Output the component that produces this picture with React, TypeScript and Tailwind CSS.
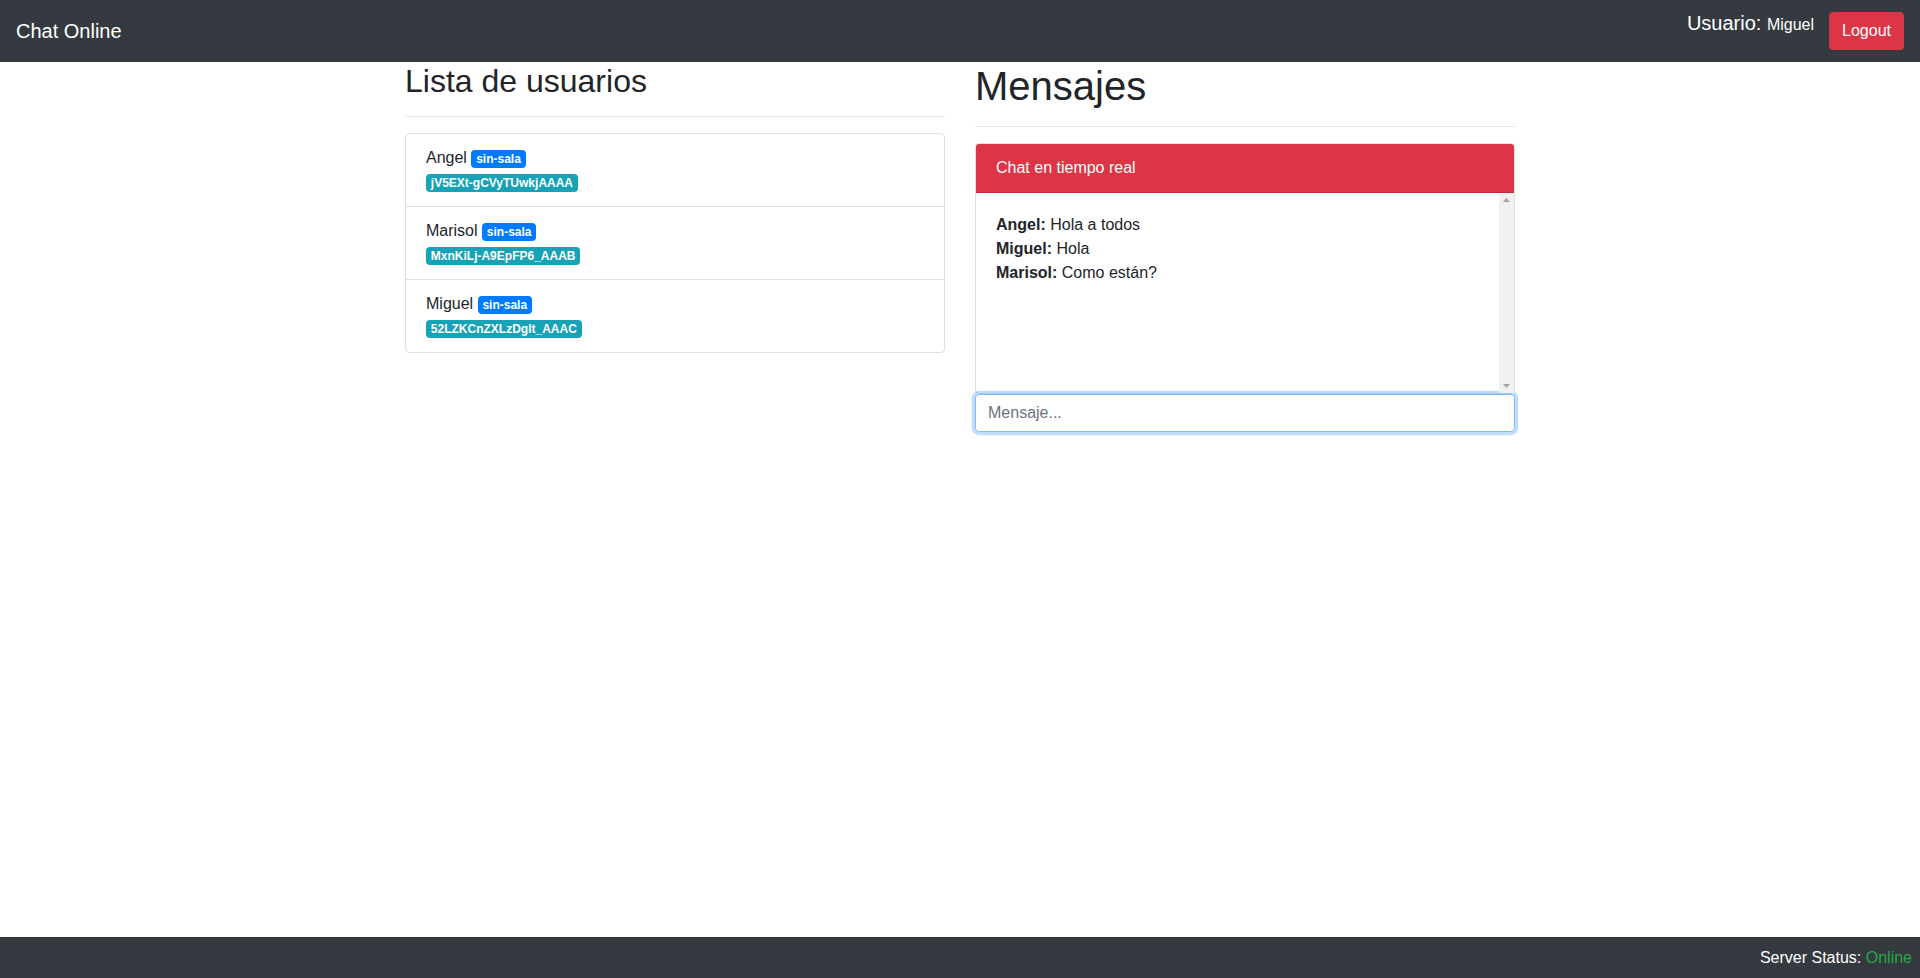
import { useState } from "react";

const users = [
  { name: "Angel", room: "sin-sala", id: "jV5EXt-gCVyTUwkjAAAA" },
  { name: "Marisol", room: "sin-sala", id: "MxnKiLj-A9EpFP6_AAAB" },
  { name: "Miguel", room: "sin-sala", id: "52LZKCnZXLzDglt_AAAC" },
];

const messages = [
  { from: "Angel", text: "Hola a todos" },
  { from: "Miguel", text: "Hola" },
  { from: "Marisol", text: "Como están?" },
];

function Badge({ color, children }: { color: string; children: React.ReactNode }) {
  return (
    <span
      className={`inline-block align-baseline px-[0.4em] py-[0.25em] text-[12px] font-bold leading-none text-white rounded whitespace-nowrap ${color}`}
    >
      {children}
    </span>
  );
}

// classic scrollbar track (content does not overflow, so no thumb)
function ScrollTrack() {
  return (
    <div className="w-[15px] shrink-0 bg-[#f1f1f1] flex flex-col justify-between items-center py-[5px]">
      <svg width="7" height="4" viewBox="0 0 7 4">
        <polygon points="3.5,0 7,4 0,4" fill="#a3a3a3" />
      </svg>
      <svg width="7" height="4" viewBox="0 0 7 4">
        <polygon points="0,0 7,0 3.5,4" fill="#a3a3a3" />
      </svg>
    </div>
  );
}

export default function App() {
  const [msg, setMsg] = useState("");

  return (
    <div className="h-screen flex flex-col bg-white text-[#212529] text-base leading-6 font-['Liberation_Sans',Arial,sans-serif]">
      {/* Navbar */}
      <nav className="h-[62px] shrink-0 bg-[#343a40] flex items-center justify-between px-4">
        <span className="text-[20px] leading-[30px] text-white">Chat Online</span>
        <div className="self-stretch flex items-start gap-[15px] pt-2">
          <span className="text-[20px] leading-[30px] text-white">
            Usuario: <span className="text-base">Miguel</span>
          </span>
          <button className="mt-1 h-[38px] px-3 rounded border border-[#dc3545] bg-[#dc3545] text-white text-base leading-6">
            Logout
          </button>
        </div>
      </nav>

      {/* Content */}
      <main className="flex-1 overflow-auto">
        <div className="w-[1140px] mx-auto px-[15px] flex gap-[30px]">
          {/* Users */}
          <section className="flex-1 min-w-0">
            <h2 className="text-[32px] leading-[1.2] font-normal">Lista de usuarios</h2>
            <hr className="my-4 border-0 border-t border-black/10" />
            <ul className="border border-black/[0.125] rounded">
              {users.map((u, i) => (
                <li
                  key={u.id}
                  className={`px-5 py-3 ${i > 0 ? "border-t border-black/[0.125]" : ""}`}
                >
                  {u.name} <Badge color="bg-[#007bff]">{u.room}</Badge>
                  <br />
                  <Badge color="bg-[#17a2b8]">{u.id}</Badge>
                </li>
              ))}
            </ul>
          </section>

          {/* Messages */}
          <section className="flex-1 min-w-0">
            <h1 className="text-[40px] leading-[1.2] font-normal">Mensajes</h1>
            <hr className="my-4 border-0 border-t border-black/10" />
            <div className="border border-black/[0.125] rounded">
              <div className="bg-[#dc3545] text-white px-5 py-3 border-b border-black/[0.125] rounded-t-[3px]">
                Chat en tiempo real
              </div>
              <div className="h-[200px] flex">
                <div className="flex-1 min-w-0 p-5">
                  {messages.map((m, i) => (
                    <div key={i}>
                      <strong className="font-bold">{m.from}:</strong> {m.text}
                    </div>
                  ))}
                </div>
                <ScrollTrack />
              </div>
            </div>
            <input
              autoFocus
              value={msg}
              onChange={(e) => setMsg(e.target.value)}
              placeholder="Mensaje..."
              className="block w-full h-[38px] px-3 py-1.5 text-base text-[#495057] bg-white border border-[#80bdff] rounded outline-none shadow-[0_0_0_0.2rem_rgba(0,123,255,0.25)] placeholder:text-[#6c757d]"
            />
          </section>
        </div>
      </main>

      {/* Footer */}
      <footer className="h-[41px] shrink-0 bg-[#343a40] flex items-center justify-end pr-2 text-white">
        Server Status:&nbsp;<span className="text-[#28a745]">Online</span>
      </footer>
    </div>
  );
}
